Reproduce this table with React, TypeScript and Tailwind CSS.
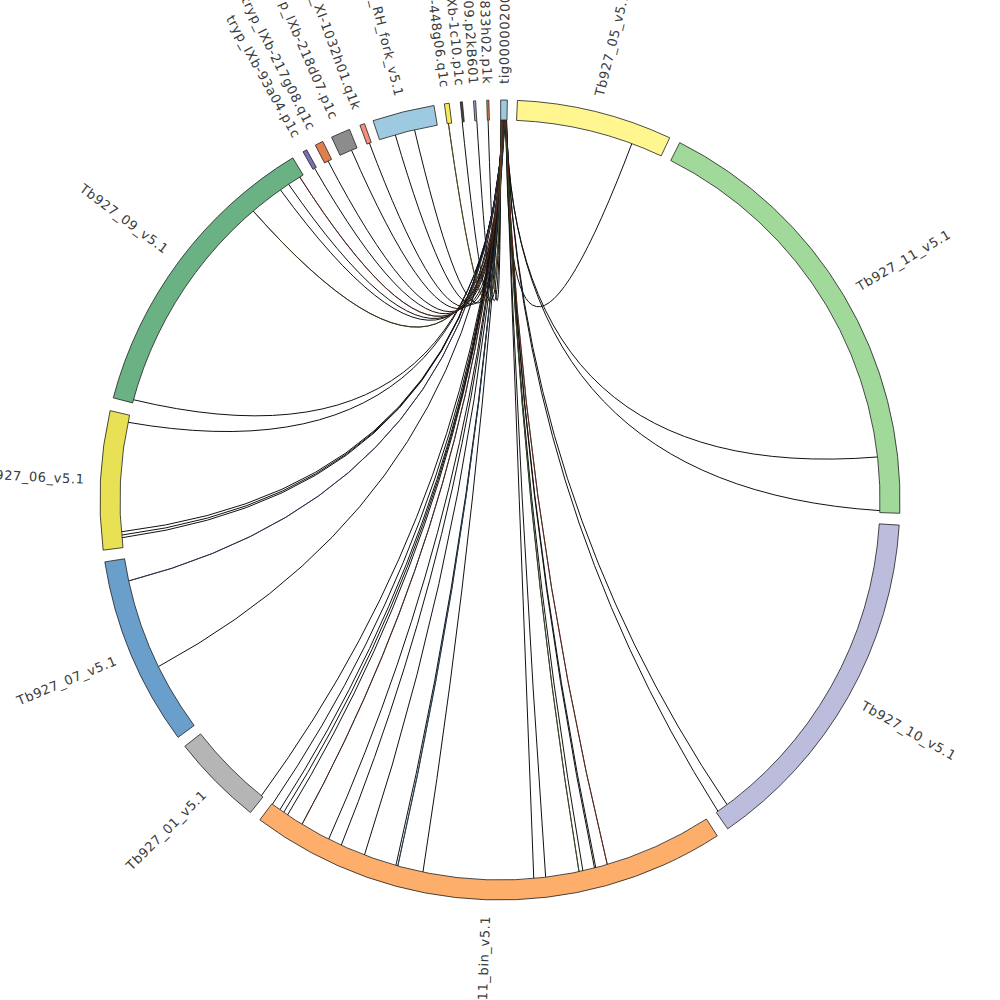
const CX = 500;
const CY = 500;
const R_IN = 380;
const R_OUT = 400;
const R_LABEL = 416;

interface Sector {
  name: string;
  start: number;
  end: number;
  color: string;
}

const sectors: Sector[] = [
  { name: 'tig00000200', start: 0.1, end: 1.05, color: '#9ecae1' },
  { name: 'Tb927_05_v5.1', start: 2.5, end: 25.1, color: '#fff68f' },
  { name: 'Tb927_11_v5.1', start: 26.7, end: 91.9, color: '#a1d99b' },
  { name: 'Tb927_10_v5.1', start: 93.6, end: 145.3, color: '#bcbddc' },
  { name: 'Tb927_11_bin_v5.1', start: 147.1, end: 216.9, color: '#fdae6b' },
  { name: 'Tb927_01_v5.1', start: 218.6, end: 232.0, color: '#b5b5b5' },
  { name: 'Tb927_07_v5.1', start: 233.6, end: 261.1, color: '#6a9fcc' },
  { name: 'Tb927_06_v5.1', start: 262.8, end: 282.9, color: '#e8e055' },
  { name: 'Tb927_09_v5.1', start: 284.8, end: 328.8, color: '#6ab183' },
  { name: 'tryp_IXb-93a04.p1c', start: 330.5, end: 331.1, color: '#7b6fb5' },
  { name: 'tryp_IXb-217g08.q1c', start: 332.5, end: 333.7, color: '#e07f4e' },
  { name: 'tryp_IXb-218d07.p1c', start: 335.1, end: 337.9, color: '#8c8c8c' },
  { name: 'tryp_XI-1032h01.q1k', start: 339.5, end: 340.2, color: '#f48e79' },
  { name: 'Tb927_RH_fork_v5.1', start: 341.5, end: 350.5, color: '#9ecae1' },
  { name: 'tryp_X-448g06.q1c', start: 352.0, end: 352.7, color: '#f5ea5a' },
  { name: 'tryp_IXb-1c10.p1c', start: 354.3, end: 354.6, color: '#444444' },
  { name: 'tryp_IXb09.p2kB601', start: 356.2, end: 356.5, color: '#a89fd0' },
  { name: 'tryp_XI-833h02.p1k', start: 358.1, end: 358.4, color: '#e8804a' },
];

// link ends on the far side; all links start on the tig contig
const targets = [
  20.3, 83.5, 91.6, 143.3, 145.0, 163.6, 165.4, 165.6, 167.4, 168.0, 173.1,
  174.9, 191.7, 195.6, 195.9, 200.9, 204.7, 206.8, 211.4, 214.0, 214.7, 215.4,
  216.8, 218.9, 244.0, 257.7, 264.3, 264.7, 265.2, 281.8, 285.3, 319.5, 324.7,
  326.2, 328.2, 330.8, 333.1, 337.0, 339.9, 344.0, 347.0, 352.2, 354.3, 356.5,
  358.2,
];

const tints: Record<number, string> = {
  5: '#7a2a1a',
  9: '#3b5a2a',
  13: '#2a4a6a',
  18: '#5a2a1a',
  25: '#3a3a6a',
  31: '#4a3a1a',
  34: '#6a2a1a',
  41: '#6a5a1a',
};

function pt(theta: number, r: number): [number, number] {
  const a = (theta * Math.PI) / 180;
  return [CX + r * Math.sin(a), CY - r * Math.cos(a)];
}

function sectorPath(a0: number, a1: number) {
  const large = a1 - a0 > 180 ? 1 : 0;
  const [x0, y0] = pt(a0, R_OUT);
  const [x1, y1] = pt(a1, R_OUT);
  const [x2, y2] = pt(a1, R_IN);
  const [x3, y3] = pt(a0, R_IN);
  return `M${x0},${y0} A${R_OUT},${R_OUT} 0 ${large} 1 ${x1},${y1} L${x2},${y2} A${R_IN},${R_IN} 0 ${large} 0 ${x3},${y3} Z`;
}

function linkPath(t1: number, t2: number) {
  let mid = (t1 + t2) / 2;
  let diff = t2 - t1;
  if (diff < 0) diff += 360;
  if (diff > 180) mid += 180;
  const [x0, y0] = pt(t1, R_IN);
  const [x2, y2] = pt(t2, R_IN);
  const [cx, cy] = pt(mid, 19);
  return `M${x0},${y0} Q${cx},${cy} ${x2},${y2}`;
}

function Label({ s }: { s: Sector }) {
  const mid = (s.start + s.end) / 2;
  const outward = mid < 180;
  return (
    <text
      transform={`rotate(${outward ? mid - 90 : mid + 90} ${CX} ${CY})`}
      x={outward ? CX + R_LABEL : CX - R_LABEL}
      y={CY}
      textAnchor={outward ? 'start' : 'end'}
      dominantBaseline="central"
      fontSize={13}
      letterSpacing={0.6}
      fill="#3a3a3a"
      style={{ fontFamily: '"DejaVu Sans", sans-serif' }}
    >
      {s.name}
    </text>
  );
}

export default function App() {
  const n = targets.length;
  const startOf = (i: number) => 1.0 - (i / (n - 1)) * 0.85;
  return (
    <div className="h-[1000px] w-[1000px] overflow-hidden bg-white">
      <svg width={1000} height={1000} viewBox="0 0 1000 1000" className="block">
        <g fill="none" strokeWidth={1}>
          {targets.map((t, i) => (
            <path key={i} d={linkPath(startOf(i), t)} stroke="#111111" />
          ))}
          {targets.map((t, i) =>
            tints[i] ? (
              <path
                key={`t${i}`}
                d={linkPath(startOf(i), t)}
                stroke={tints[i]}
                strokeWidth={0.7}
              />
            ) : null
          )}
        </g>
        <g stroke="#1e1e1e" strokeWidth={0.8}>
          {sectors.map((s) => (
            <path key={s.name} d={sectorPath(s.start, s.end)} fill={s.color} />
          ))}
        </g>
        <g>
          {sectors.map((s) => (
            <Label key={s.name} s={s} />
          ))}
        </g>
      </svg>
    </div>
  );
}
